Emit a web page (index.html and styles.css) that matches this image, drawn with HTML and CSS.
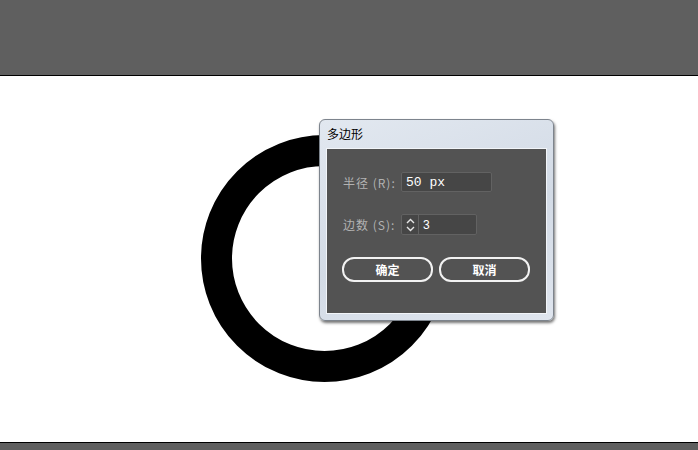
FILE: index.html
```html
<!DOCTYPE html>
<html lang="zh">
<head>
    <meta charset="UTF-8">
    <title>多边形</title>
    <link rel="stylesheet" href="styles.css">
</head>
<body>

<div class="topbar"></div>

<div class="canvas">
    <div class="ring"></div>

    <div class="dialog">
        <div class="dialog-title">多边形</div>
        <div class="panel">
            <div class="row">
                <label class="row-label" for="radius">半径 (R):</label>
                <input class="field field-wide" id="radius" type="text" value="50 px">
            </div>
            <div class="row">
                <label class="row-label" for="sides">边数 (S):</label>
                <div class="spinner">
                    <span class="spin-arrows">
                        <svg width="9" height="14" viewBox="0 0 9 14">
                            <path d="M1 5 L4.5 1.5 L8 5 M1 9 L4.5 12.5 L8 9" fill="none" stroke="#e6e6e6" stroke-width="1.4"/>
                        </svg>
                    </span>
                    <input class="spin-value" id="sides" type="text" value="3">
                </div>
            </div>
            <div class="buttons">
                <button class="btn" type="button">确定</button>
                <button class="btn" type="button">取消</button>
            </div>
        </div>
    </div>
</div>

<div class="bottombar"></div>

</body>
</html>
```

FILE: styles.css
```css
body {
    margin: 0;
    padding: 0;
    overflow: hidden;
    font-family: "Noto Sans CJK SC", "Liberation Sans", sans-serif;
    background-color: #fff;
}
.topbar {
    height: 75px;
    background-color: #5f5f5f;
    border-bottom: 1px solid #000;
}
.canvas {
    position: relative;
    height: 366px;
    background-color: #fff;
}
.bottombar {
    height: 8px;
    background-color: #5f5f5f;
    border-top: 1px solid #000;
}
.ring {
    position: absolute;
    left: 201px;
    top: 59px;
    width: 247px;
    height: 247px;
    box-sizing: border-box;
    border: 31px solid #000;
    border-radius: 50%;
}
.dialog {
    position: absolute;
    left: 319px;
    top: 43px;
    width: 235px;
    height: 202px;
    box-sizing: border-box;
    padding: 0 6px 6px 6px;
    display: flex;
    flex-direction: column;
    background: linear-gradient(160deg, #e2e8f0 0%, #d3dbe6 55%, #dfe5ee 100%);
    border: 1px solid #7d848d;
    border-radius: 6px;
    box-shadow: 1px 2px 3px rgba(0,0,0,0.55);
}
.dialog-title {
    height: 28px;
    line-height: 27px;
    padding-left: 1px;
    font-size: 12px;
    color: #000;
}
.panel {
    flex: 1;
    background-color: #535353;
    border: 1px solid #f2f5f9;
    padding: 23px 16px 0 16px;
}
.row {
    display: flex;
    align-items: center;
    margin-bottom: 22px;
}
.row-label {
    width: 58px;
    font-size: 12px;
    color: #b2b2b2;
    letter-spacing: 1px;
}
.field {
    height: 20px;
    box-sizing: border-box;
    background-color: #464646;
    border: 1px solid #626262;
    border-radius: 2px;
    color: #fff;
    font-family: "Liberation Mono", monospace;
    font-size: 13px;
    padding: 0 4px;
    outline: none;
}
.field-wide {
    width: 91px;
}
.spinner {
    display: flex;
    width: 76px;
    height: 21px;
    box-sizing: border-box;
    background-color: #464646;
    border: 1px solid #626262;
    border-radius: 2px;
}
.spin-arrows {
    width: 16px;
    display: flex;
    align-items: center;
    justify-content: center;
    border-right: 1px solid #626262;
}
.spin-value {
    flex: 1;
    min-width: 0;
    background: none;
    border: none;
    color: #fff;
    font-family: "Liberation Sans", sans-serif;
    font-size: 12px;
    padding: 0 4px;
    outline: none;
}
.buttons {
    display: flex;
    gap: 6px;
    margin: 2px 0 0 -1px;
}
.btn {
    width: 92px;
    height: 25px;
    background-color: #535353;
    border: 2px solid #f2f2f2;
    border-radius: 12px;
    color: #fff;
    font-family: "Noto Sans CJK SC", sans-serif;
    font-size: 12px;
    font-weight: bold;
    padding: 0;
    cursor: pointer;
}
```
